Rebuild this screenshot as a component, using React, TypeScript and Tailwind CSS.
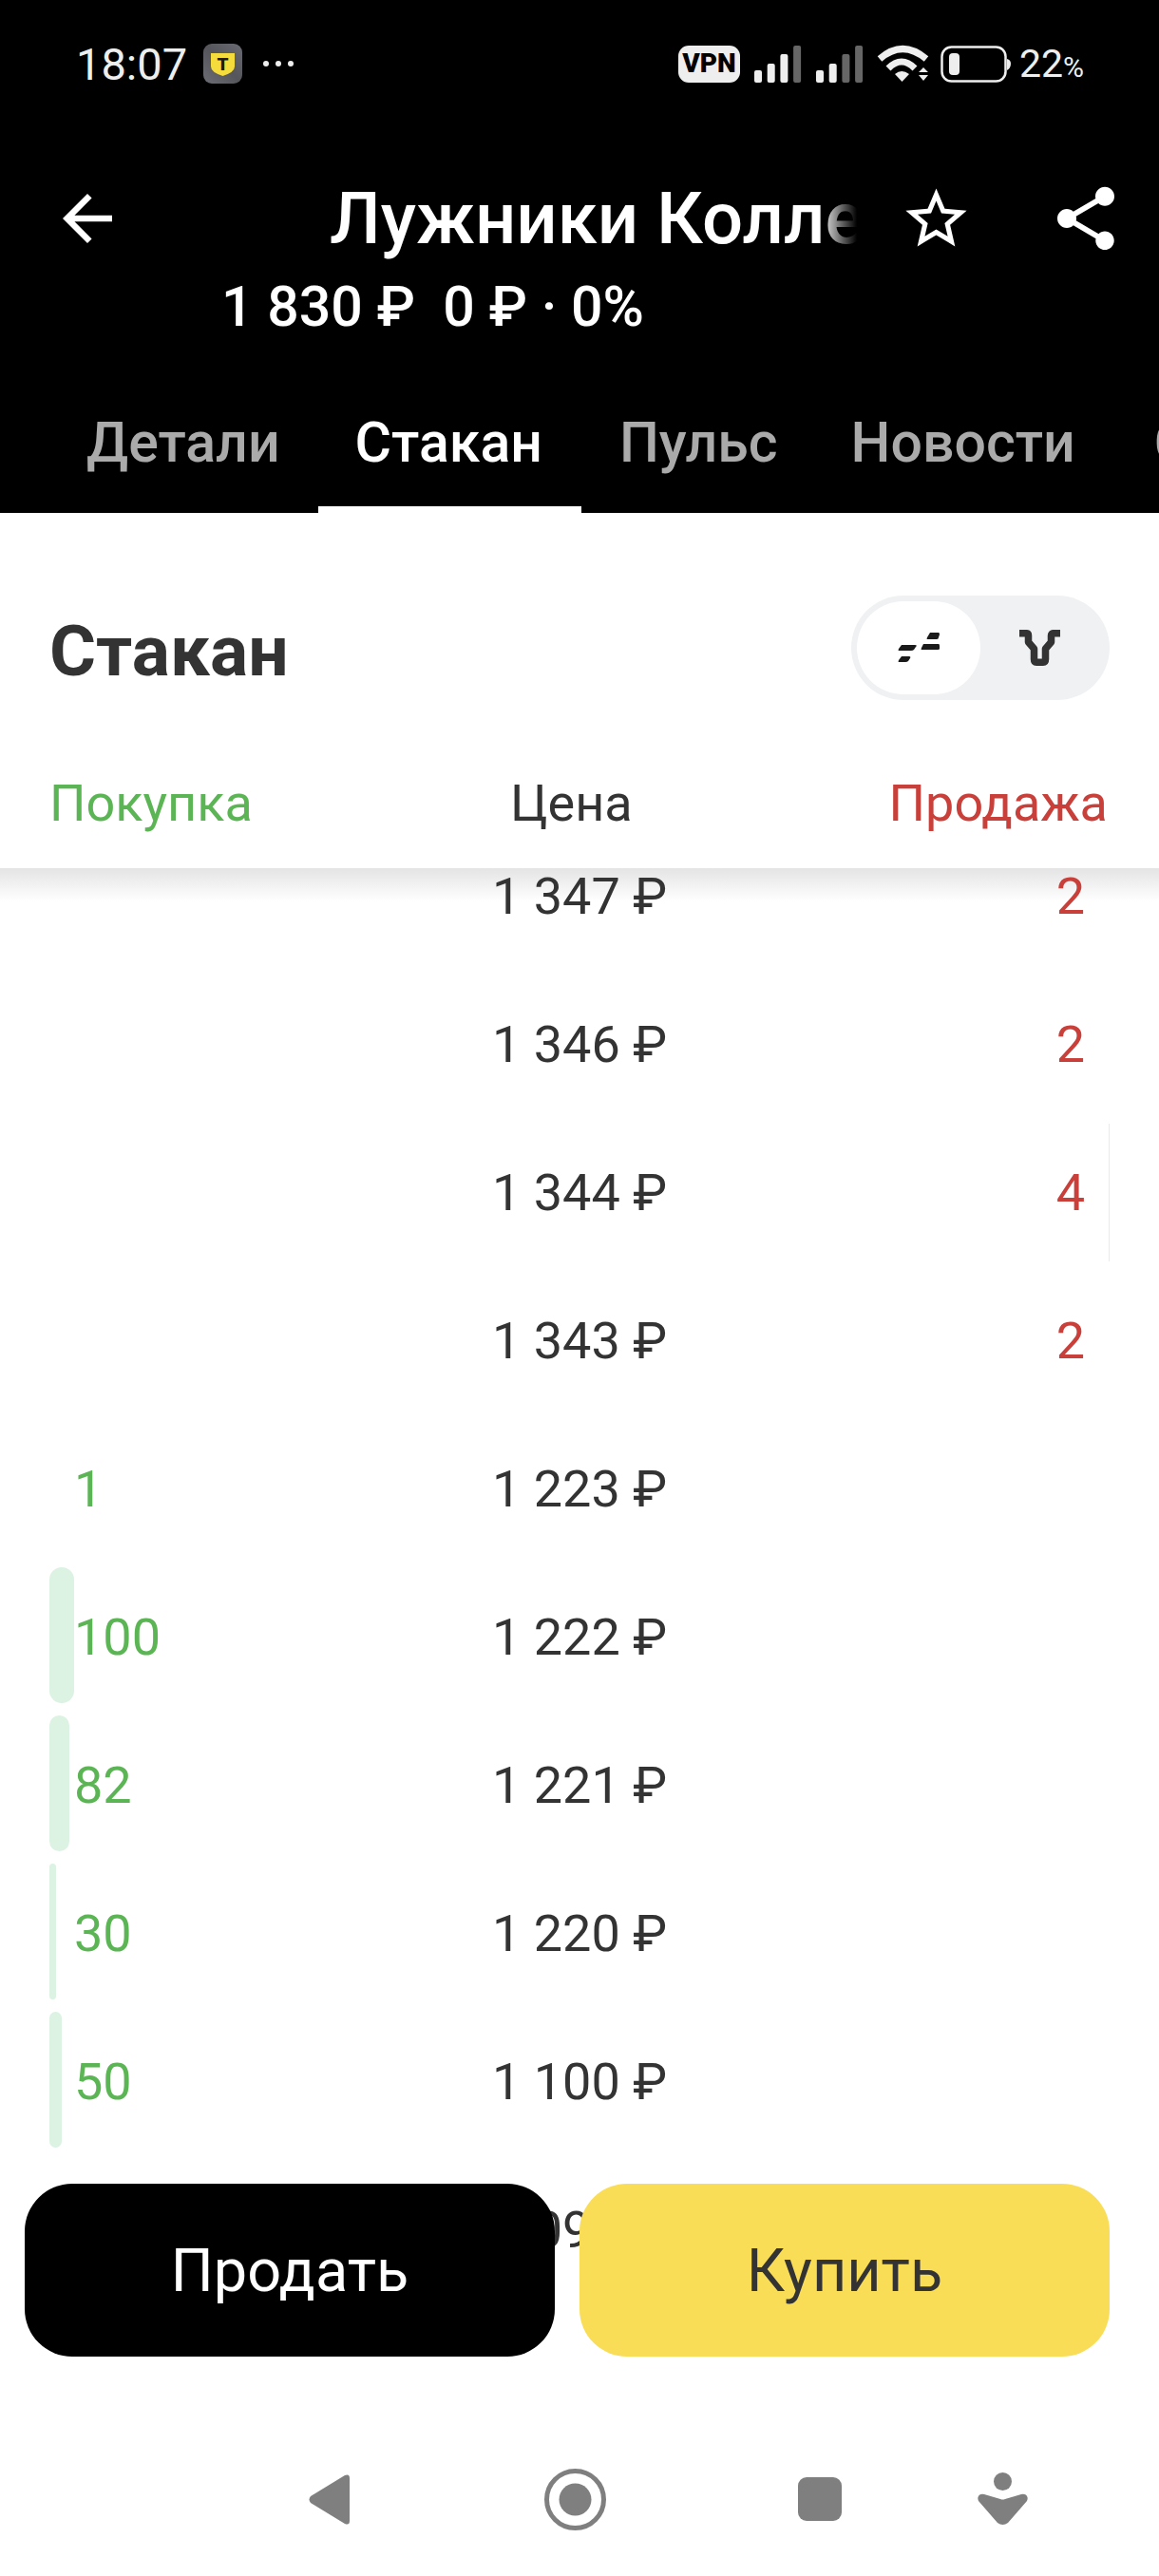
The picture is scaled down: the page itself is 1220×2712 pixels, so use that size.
import React from "react";

const rows = [
  { p: "1 347 ₽", s: "2", sb: 0 },
  { p: "1 346 ₽", s: "2", sb: 0 },
  { p: "1 344 ₽", s: "4", sb: 1 },
  { p: "1 343 ₽", s: "2", sb: 0 },
  { p: "1 223 ₽", b: "1", bb: 0 },
  { p: "1 222 ₽", b: "100", bb: 26 },
  { p: "1 221 ₽", b: "82", bb: 21 },
  { p: "1 220 ₽", b: "30", bb: 7 },
  { p: "1 100 ₽", b: "50", bb: 13 },
  { p: "1 099 ₽" },
];

function Signal({ dim }: { dim: number }) {
  const hs = [13, 20, 30, 39];
  return (
    <svg width="50" height="39" viewBox="0 0 50 39">
      {hs.map((h, i) => (
        <rect key={i} x={i * 13.7} y={39 - h} width="8" height={h} rx="2" fill={i >= 4 - dim ? "#666666" : "#eeeeee"} />
      ))}
    </svg>
  );
}

function StatusBar() {
  return (
    <div className="flex h-[134px] items-center text-[#eeeeee]">
      <span className="ml-[80px] w-[115px] text-[47px] leading-none">18:07</span>
      <svg className="ml-[19px]" width="41" height="42" viewBox="0 0 41 42">
        <defs>
          <linearGradient id="tg" x1="0" y1="1" x2="1" y2="0">
            <stop offset="0" stopColor="#6d6d75" />
            <stop offset="0.5" stopColor="#55555c" />
            <stop offset="1" stopColor="#6a6a72" />
          </linearGradient>
        </defs>
        <rect width="41" height="42" rx="9" fill="url(#tg)" />
        <path d="M8 10 H33 V24 Q33 30 20.5 34 Q8 30 8 24 Z" fill="#f4dc3c" />
        <text x="20.5" y="28" textAnchor="middle" fontFamily="Roboto, sans-serif" fontWeight="900" fontSize="19" fill="#1a1a1a">T</text>
      </svg>
      <div className="ml-[22px] flex gap-[7px]">
        <span className="h-[6px] w-[6px] rounded-full bg-[#eeeeee]" />
        <span className="h-[6px] w-[6px] rounded-full bg-[#eeeeee]" />
        <span className="h-[6px] w-[6px] rounded-full bg-[#eeeeee]" />
      </div>
      <div className="ml-[405px] flex h-[39px] w-[65px] items-center justify-center rounded-[11px] bg-[#eeeeee] text-[28px] font-black leading-none text-black">VPN</div>
      <div className="ml-[15px]"><Signal dim={1} /></div>
      <div className="ml-[15px]"><Signal dim={2} /></div>
      <svg className="ml-[14px]" width="56" height="40" viewBox="0 0 56 40">
        <path d="M3 15 Q27 -6 52 15" fill="none" stroke="#eeeeee" strokeWidth="7" />
        <path d="M12 25 Q26 11 40 25" fill="none" stroke="#eeeeee" strokeWidth="7" />
        <path d="M19 31 Q26 25 34 31 L26.5 39 Z" fill="#eeeeee" />
        <path d="M49 24 L54 29 H44 Z M44 32 H54 L49 38 Z" fill="#eeeeee" />
      </svg>
      <svg className="ml-[11px]" width="75" height="39" viewBox="0 0 75 39">
        <rect x="1.5" y="1.5" width="67" height="36" rx="10" fill="none" stroke="#eeeeee" strokeWidth="2.5" />
        <rect x="9" y="8" width="11" height="23" rx="4" fill="#eeeeee" />
        <path d="M70 14 Q74 15 74 19 Q74 24 70 26 Z" fill="#eeeeee" />
      </svg>
      <span className="ml-[8px] text-[41px] leading-none">22<span className="text-[30px]">%</span></span>
    </div>
  );
}

function Header() {
  return (
    <div className="flex h-[540px] flex-col bg-black text-white">
      <StatusBar />
      <div className="mt-[50px] flex h-[92px] items-center">
        <svg className="ml-[53px] shrink-0" width="78" height="78" viewBox="0 0 24 24" fill="#ffffff">
          <path d="M20 11H7.83l5.59-5.59L12 4l-8 8 8 8 1.41-1.41L7.83 13H20v-2z" />
        </svg>
        <div className="relative ml-[216px] w-[555px] shrink-0 overflow-hidden whitespace-nowrap text-[76px] font-medium leading-[92px]">
          Лужники Коллекция
          <div className="absolute inset-y-0 right-0 w-[40px] bg-gradient-to-r from-transparent to-black" />
        </div>
        <svg className="ml-[45px] shrink-0" width="77" height="77" viewBox="0 0 24 24" fill="#ffffff">
          <path d="M22 9.24l-7.19-.62L12 2 9.19 8.63 2 9.24l5.46 4.73L5.82 21 12 17.27 18.18 21l-1.63-7.03L22 9.24zM12 15.4l-3.76 2.27 1-4.28-3.32-2.88 4.38-.38L12 6.1l1.71 4.04 4.38.38-3.32 2.88 1 4.28L12 15.4z" />
        </svg>
        <svg className="ml-[79px] shrink-0" width="80" height="80" viewBox="0 0 24 24" fill="#ffffff">
          <path d="M18 16.08c-.76 0-1.44.3-1.96.77L8.91 12.7c.05-.23.09-.46.09-.7s-.04-.47-.09-.7l7.05-4.11c.54.5 1.25.81 2.04.81 1.66 0 3-1.34 3-3s-1.34-3-3-3-3 1.34-3 3c0 .24.04.47.09.7L8.04 9.81C7.5 9.31 6.79 9 6 9c-1.66 0-3 1.34-3 3s1.34 3 3 3c.79 0 1.5-.31 2.04-.81l7.12 4.16c-.05.21-.08.43-.08.65 0 1.61 1.31 2.92 2.92 2.92 1.61 0 2.92-1.31 2.92-2.92s-1.31-2.92-2.92-2.92z" />
        </svg>
      </div>
      <div className="ml-[233px] flex h-[92px] items-center whitespace-pre text-[59px] font-medium leading-none">1 830 ₽  0 ₽ · 0%</div>
      <div className="relative flex flex-1 items-center overflow-hidden whitespace-nowrap pt-[22px] text-[59px] font-medium leading-none text-[#aaaaaa]">
        <span className="ml-[91px]">Детали</span>
        <span className="ml-[79px] text-white">Стакан</span>
        <span className="ml-[81px]">Пульс</span>
        <span className="ml-[77px]">Новости</span>
        <span className="ml-[83px]">Стратегии</span>
        <div className="absolute bottom-0 left-[335px] h-[7px] w-[277px] bg-white" />
      </div>
    </div>
  );
}

function OrderHead() {
  return (
    <div className="relative z-10 flex h-[374px] flex-col bg-white px-[52px]">
      <div className="mt-[87px] flex h-[110px] items-center justify-between">
        <h1 className="pt-[6px] text-[75px] font-bold leading-none text-[#333333]">Стакан</h1>
        <div className="flex h-[110px] w-[272px] items-center rounded-full bg-[#eff1f2] p-[6px]">
          <div className="flex h-[98px] w-[130px] items-center justify-center rounded-full bg-white">
            <svg width="44" height="32" viewBox="0 0 44 32" fill="#1a1a1a">
              <path d="M4 13 H18 Q21 13 19 15 L17 18 Q16 19 14 19 H1 Q0 19 1 17 Z" />
              <path d="M4 25 H12 Q14 25 13 27 L11 30 Q10 31 8 31 H1 Q0 31 1 29 Z" />
              <path d="M27 12 H43 Q44 12 44 14 V17 Q44 18 42 18 H25 Q24 18 25 16 Z" />
              <path d="M34 0 H43 Q44 0 44 2 L43 5 Q43 7 41 7 H31 Q30 7 31 5 Z" />
            </svg>
          </div>
          <div className="flex flex-1 items-center justify-center pr-[6px]">
            <svg width="43" height="38" viewBox="0 0 43 38" fill="none" stroke="#333333" strokeWidth="7.5" strokeLinejoin="round">
              <path d="M0 3.7 H7 Q9.5 3.7 9.5 6 V13 L15.5 20 V31 Q15.5 34.2 18 34.2 H25 Q27.5 34.2 27.5 31 V20 L33.5 13 V6 Q33.5 3.7 36 3.7 H43" />
            </svg>
          </div>
        </div>
      </div>
      <div className="mt-[69px] flex h-[80px] items-center pr-[2px] text-[54px] leading-none">
        <span className="w-[485px] text-[#5cb554]">Покупка</span>
        <span className="text-[#333333]">Цена</span>
        <span className="ml-auto text-[#c9403a]">Продажа</span>
      </div>
    </div>
  );
}

function Book() {
  return (
    <div className="relative flex-1 overflow-hidden bg-white">
      <div className="absolute inset-x-0 top-0 h-[35px] bg-gradient-to-b from-[#e4e4e4] to-transparent" />
      <div className="-mt-[48px] flex flex-col text-[54px] leading-none">
        {rows.map((r) => (
          <div key={r.p} className="relative flex h-[156px] items-center">
            {r.bb ? (
              <div className="absolute left-[52px] top-[4px] h-[143px] rounded-full bg-[#dcf2e3]" style={{ width: r.bb }} />
            ) : null}
            {r.sb ? <div className="absolute left-[1167px] top-[5px] h-[145px] w-px bg-[#f2e6e6]" /> : null}
            <span className="relative w-[518px] pl-[78px] text-[#5cb554]">{r.b}</span>
            <span className="relative flex-1 text-[#333333]">{r.p}</span>
            <span className="relative pr-[78px] text-[#c9403a]">{r.s}</span>
          </div>
        ))}
      </div>
      <div className="absolute inset-x-[26px] bottom-[69px] z-20 flex gap-[26px] pr-[26px] text-[63px] leading-none">
        <button className="flex h-[182px] flex-1 items-center justify-center rounded-[50px] bg-black text-white">Продать</button>
        <button className="flex h-[182px] flex-1 items-center justify-center rounded-[50px] bg-[#f9dd57] text-[#333333]">Купить</button>
      </div>
    </div>
  );
}

function NavBar() {
  return (
    <div className="flex h-[162px] items-center bg-white">
      <svg className="ml-[325px]" width="43" height="53" viewBox="0 0 43 53" fill="#7f7f7f">
        <path d="M38 1 Q43 -1 43 4 V49 Q43 54 38 52 L2 30 Q-1 26.5 2 23 Z" />
      </svg>
      <svg className="ml-[205px]" width="65" height="65" viewBox="0 0 65 65" fill="#7f7f7f">
        <circle cx="32.5" cy="32.5" r="30" fill="none" stroke="#7f7f7f" strokeWidth="5" />
        <circle cx="32.5" cy="32.5" r="17" />
      </svg>
      <div className="ml-[202px] h-[46px] w-[46px] rounded-[9px] bg-[#7f7f7f]" />
      <svg className="ml-[143px]" width="53" height="56" viewBox="0 0 53 56" fill="#7f7f7f">
        <circle cx="26.5" cy="9.5" r="9.5" />
        <path d="M7 23 Q2 22 0.5 26 Q0 28 1 30 L21 53 Q26.5 57 32 53 L52 30 Q53 28 52.5 26 Q51 22 46 23 L29 28 Q26.5 29 24 28 Z" />
      </svg>
    </div>
  );
}

export default function App() {
  return (
    <div className="flex h-[2712px] w-[1220px] flex-col overflow-hidden bg-white font-['Roboto',sans-serif]">
      <Header />
      <OrderHead />
      <Book />
      <NavBar />
    </div>
  );
}
